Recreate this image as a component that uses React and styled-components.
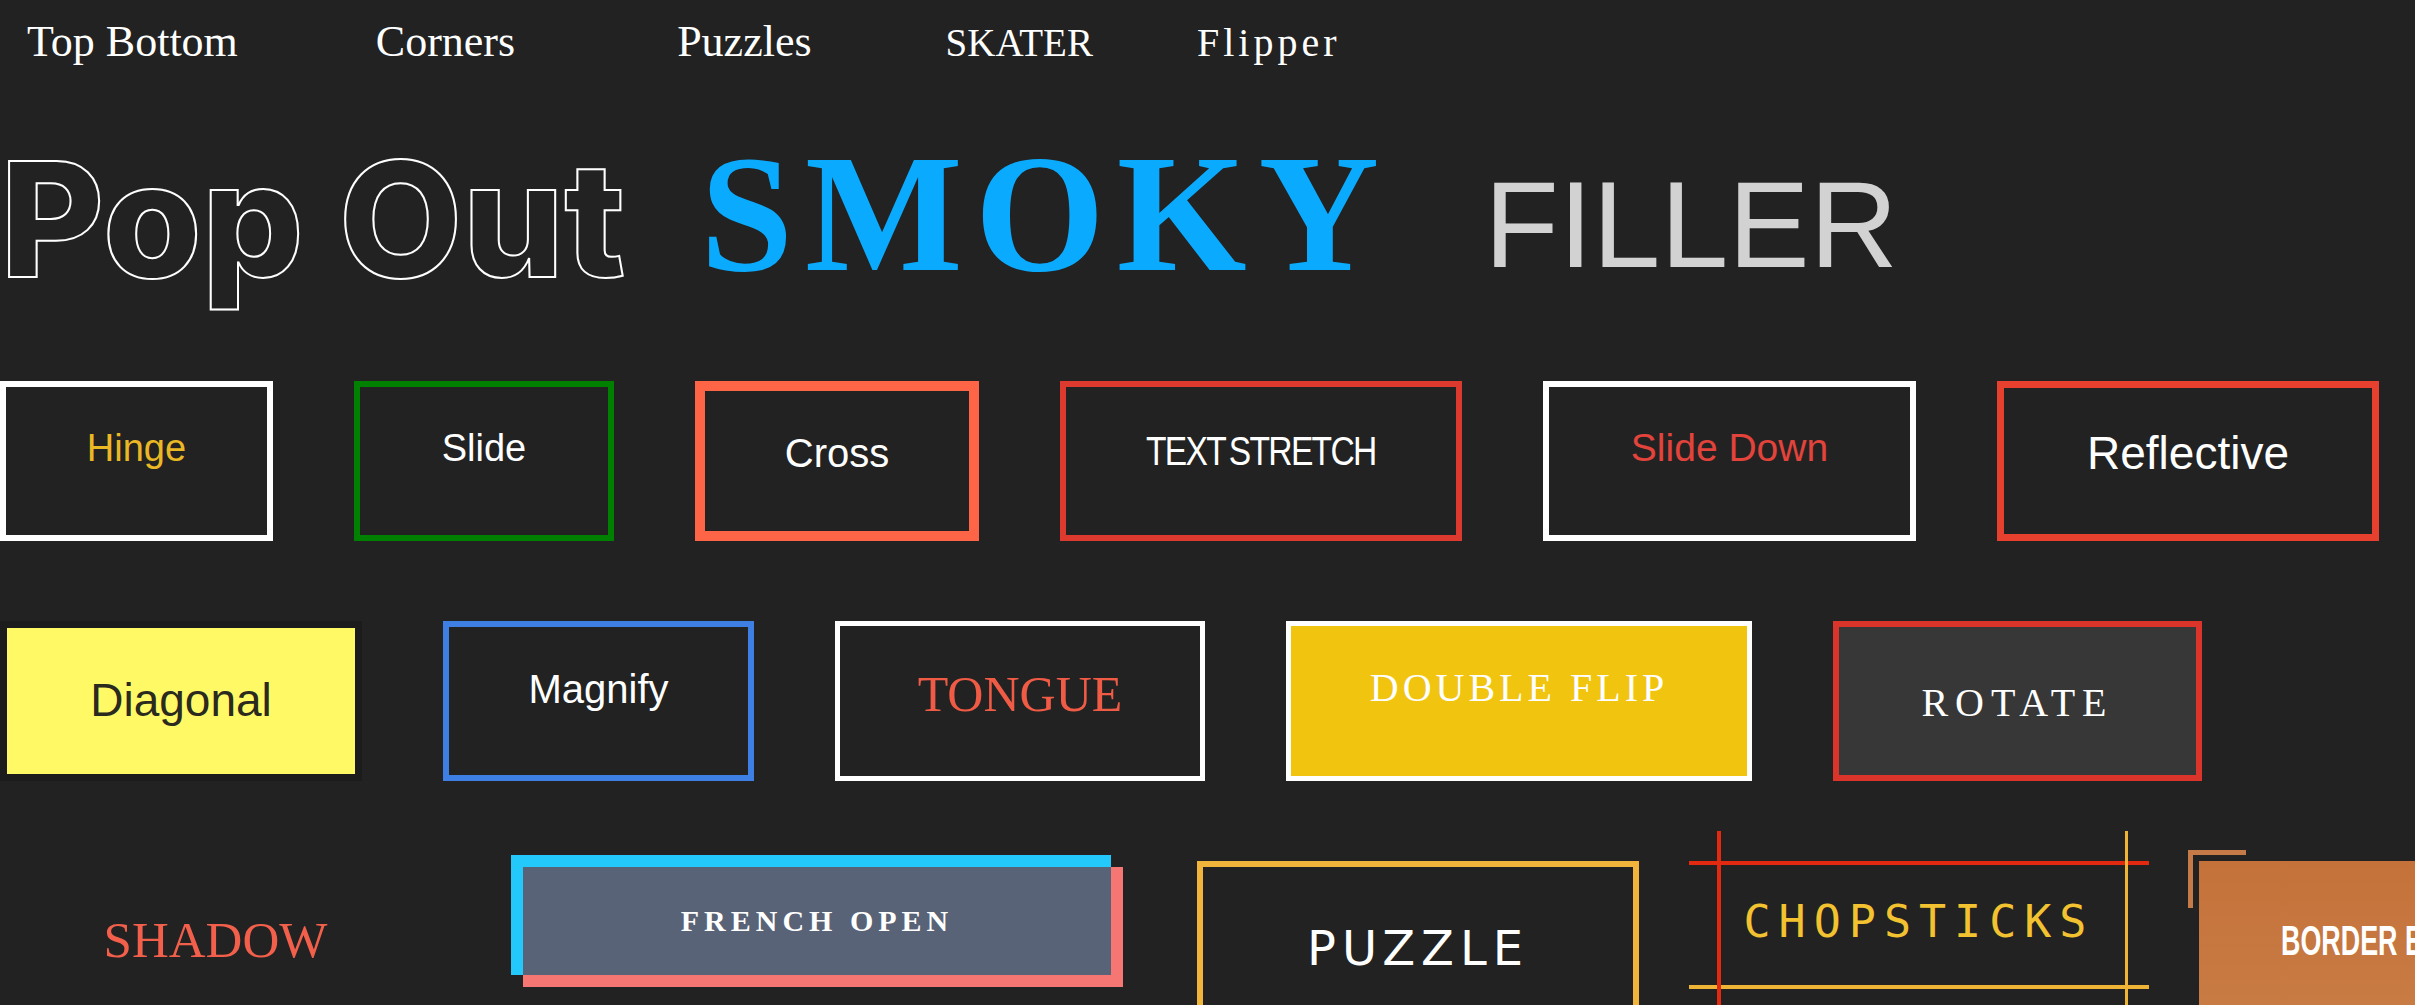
import React from "react";
import styled, { createGlobalStyle } from "styled-components";

const SANS = '"Liberation Sans", Arial, sans-serif';
const SERIF = '"Liberation Serif", "Times New Roman", serif';
const MONO = '"DejaVu Sans Mono", "Liberation Mono", monospace';
const WIDE = '"DejaVu Sans", Verdana, sans-serif';

const GlobalStyle = createGlobalStyle`
  html, body {
    margin: 0;
    padding: 0;
    background: #222222;
    overflow: hidden;
  }
`;

const Page = styled.div`
  width: 2415px;
  height: 1005px;
  overflow: hidden;
  background: #222222;
`;

const Nav = styled.nav`
  display: flex;
  align-items: baseline;
  padding-top: 16px;
  height: 49px;
`;

const NavLink = styled.a`
  font-family: ${SERIF};
  font-size: ${(p) => p.$size || 44}px;
  letter-spacing: ${(p) => p.$spacing || 0}px;
  margin-left: ${(p) => p.$ml}px;
  color: #ffffff;
  text-decoration: none;
  white-space: nowrap;
`;

/* bottoms aligned; each title sits a little higher than the one before it */
const Headline = styled.div`
  display: flex;
  align-items: flex-end;
  height: 192px;
  margin-top: 59px;
  white-space: nowrap;
`;

const PopOut = styled.h1`
  margin: 0 75px 0 0;
  font-family: Inter, "Open Sans", sans-serif;
  font-weight: 800;
  font-size: 160px;
  color: transparent;
  -webkit-text-stroke: 2px #ffffff;
`;

const Smoky = styled.h2`
  margin: 0 93px 6px 0;
  font-family: ${SERIF};
  font-weight: 700;
  font-size: 167px;
  letter-spacing: 12px;
  color: #0aabff;
`;

const Filler = styled.h2`
  margin: 0 0 21px 0;
  font-family: ${SANS};
  font-weight: 400;
  font-size: 122px;
  color: #d2d2d2;
`;

const Rows = styled.div`
  display: flex;
  flex-direction: column;
  gap: 80px;
  margin-top: 65px;
`;

const Row = styled.div`
  display: flex;
  align-items: flex-start;
  gap: ${(p) => p.$gap || 0}px;
`;

const Tile = styled.div`
  box-sizing: border-box;
  flex: none;
  width: ${(p) => p.$w}px;
  height: ${(p) => p.$h || 160}px;
  margin-left: ${(p) => p.$ml || 0}px;
  display: flex;
  align-items: center;
  justify-content: center;
  border: ${(p) => p.$bw || 0}px solid ${(p) => p.$bc || "transparent"};
  background: ${(p) => p.$bg || "transparent"};
  padding-bottom: ${(p) => (p.$lift > 0 ? p.$lift * 2 : 0)}px;
  padding-top: ${(p) => (p.$lift < 0 ? -p.$lift * 2 : 0)}px;
`;

const Label = styled.span`
  display: inline-block;
  font-family: ${(p) => p.$font || SANS};
  font-size: ${(p) => p.$size}px;
  font-weight: ${(p) => p.$weight || 400};
  letter-spacing: ${(p) => p.$spacing || 0}px;
  word-spacing: ${(p) => p.$words || 0}px;
  color: ${(p) => p.$color || "#ffffff"};
  transform: ${(p) => (p.$squeeze ? `scaleX(${p.$squeeze})` : "none")};
  transform-origin: ${(p) => p.$origin || "center"};
  white-space: nowrap;
`;

const French = styled.div`
  position: relative;
  flex: none;
  box-sizing: border-box;
  width: 612px;
  height: 132px;
  margin: -6px 0 0 80px;
  padding: 12px 0 0 12px;

  &::before,
  &::after {
    content: "";
    position: absolute;
    width: 600px;
    height: 120px;
  }
  &::before {
    left: 0;
    top: 0;
    background: #22c9fa;
  }
  &::after {
    left: 12px;
    top: 12px;
    background: #f67673;
  }
`;

const FrenchFace = styled.div`
  position: relative;
  z-index: 1;
  width: 588px;
  height: 108px;
  display: flex;
  align-items: center;
  justify-content: center;
  background: #596377;
`;

const Chopsticks = styled.div`
  position: relative;
  flex: none;
  box-sizing: border-box;
  width: 460px;
  height: 128px;
  margin-left: 50px;
  display: flex;
  align-items: center;
  justify-content: center;
  padding-bottom: 8px;
  border-top: 4px solid #e3290f;
  border-bottom: 4px solid #efb435;

  &::before,
  &::after {
    content: "";
    position: absolute;
    top: -34px;
    bottom: -80px;
  }
  &::before {
    left: 28px;
    width: 4px;
    background: #e3290f;
  }
  &::after {
    right: 21px;
    width: 3px;
    background: #efb435;
  }
`;

const Copper = styled.div`
  position: relative;
  flex: none;
  box-sizing: border-box;
  width: 420px;
  height: 160px;
  margin-left: 50px;
  display: flex;
  align-items: center;
  padding-left: 82px;
  background: linear-gradient(#c4723a, #c97c45);

  &::before {
    content: "";
    position: absolute;
    left: -11px;
    top: -11px;
    width: 53px;
    height: 53px;
    border-top: 5px solid #c57a48;
    border-left: 5px solid #c57a48;
  }
`;

export default function App() {
  return (
    <Page>
      <GlobalStyle />
      <Nav>
        <NavLink $ml={27}>Top Bottom</NavLink>
        <NavLink $ml={138}>Corners</NavLink>
        <NavLink $ml={162}>Puzzles</NavLink>
        <NavLink $ml={134} $size={39}>SKATER</NavLink>
        <NavLink $ml={104} $size={40} $spacing={4}>Flipper</NavLink>
      </Nav>

      <Headline>
        <PopOut>Pop Out</PopOut>
        <Smoky>SMOKY</Smoky>
        <Filler>FILLER</Filler>
      </Headline>

      <Rows>
        <Row $gap={81}>
          <Tile $w={273} $bw={6} $bc="#ffffff" $lift={13}>
            <Label $size={38} $color="#e9b824">Hinge</Label>
          </Tile>
          <Tile $w={260} $bw={6} $bc="#008000" $lift={13}>
            <Label $size={38}>Slide</Label>
          </Tile>
          <Tile $w={284} $bw={10} $bc="#fe6446" $lift={8}>
            <Label $size={40}>Cross</Label>
          </Tile>
          <Tile $w={402} $bw={6} $bc="#dc3a2f" $lift={10}>
            <Label $size={40} $spacing={-2} $words={-4} $squeeze={0.84}>TEXT STRETCH</Label>
          </Tile>
          <Tile $w={373} $bw={6} $bc="#ffffff" $lift={13}>
            <Label $size={39} $color="#e2433b">Slide Down</Label>
          </Tile>
          <Tile $w={382} $bw={7} $bc="#e8402f" $lift={8}>
            <Label $size={46}>Reflective</Label>
          </Tile>
        </Row>

        <Row $gap={81}>
          <Tile $w={362} $bw={7} $bc="#1c1c1c" $bg="#fff966" $lift={1}>
            <Label $size={46} $color="#2a2a1e">Diagonal</Label>
          </Tile>
          <Tile $w={311} $bw={6} $bc="#3d7fe2" $lift={12}>
            <Label $size={40}>Magnify</Label>
          </Tile>
          <Tile $w={370} $bw={5} $bc="#ffffff" $lift={7}>
            <Label $font={SERIF} $size={50} $color="#f05b45">TONGUE</Label>
          </Tile>
          <Tile $w={466} $bw={5} $bc="#ffffff" $bg="#f1c40f" $lift={14}>
            <Label $font={SERIF} $size={40} $spacing={4}>DOUBLE FLIP</Label>
          </Tile>
          <Tile $w={369} $bw={6} $bc="#da342b" $bg="#373737" $lift={-1}>
            <Label $font={SERIF} $size={40} $spacing={7}>ROTATE</Label>
          </Tile>
        </Row>

        <Row>
          <Tile $w={431} $lift={1}>
            <Label $font={SERIF} $size={51} $color="#f2604b">SHADOW</Label>
          </Tile>
          <French>
            <FrenchFace>
              <Label $font={SERIF} $size={30} $weight={700} $spacing={5}>FRENCH OPEN</Label>
            </FrenchFace>
          </French>
          <Tile $w={442} $ml={74} $bw={6} $bc="#f0b53a" $lift={-7}>
            <Label $font={WIDE} $size={48} $spacing={6}>PUZZLE</Label>
          </Tile>
          <Chopsticks>
            <Label $font={MONO} $size={45} $spacing={8} $color="#f2c230">CHOPSTICKS</Label>
          </Chopsticks>
          <Copper>
            <Label $size={42} $weight={700} $squeeze={0.64} $origin="left">BORDER EFFECT</Label>
          </Copper>
        </Row>
      </Rows>
    </Page>
  );
}
